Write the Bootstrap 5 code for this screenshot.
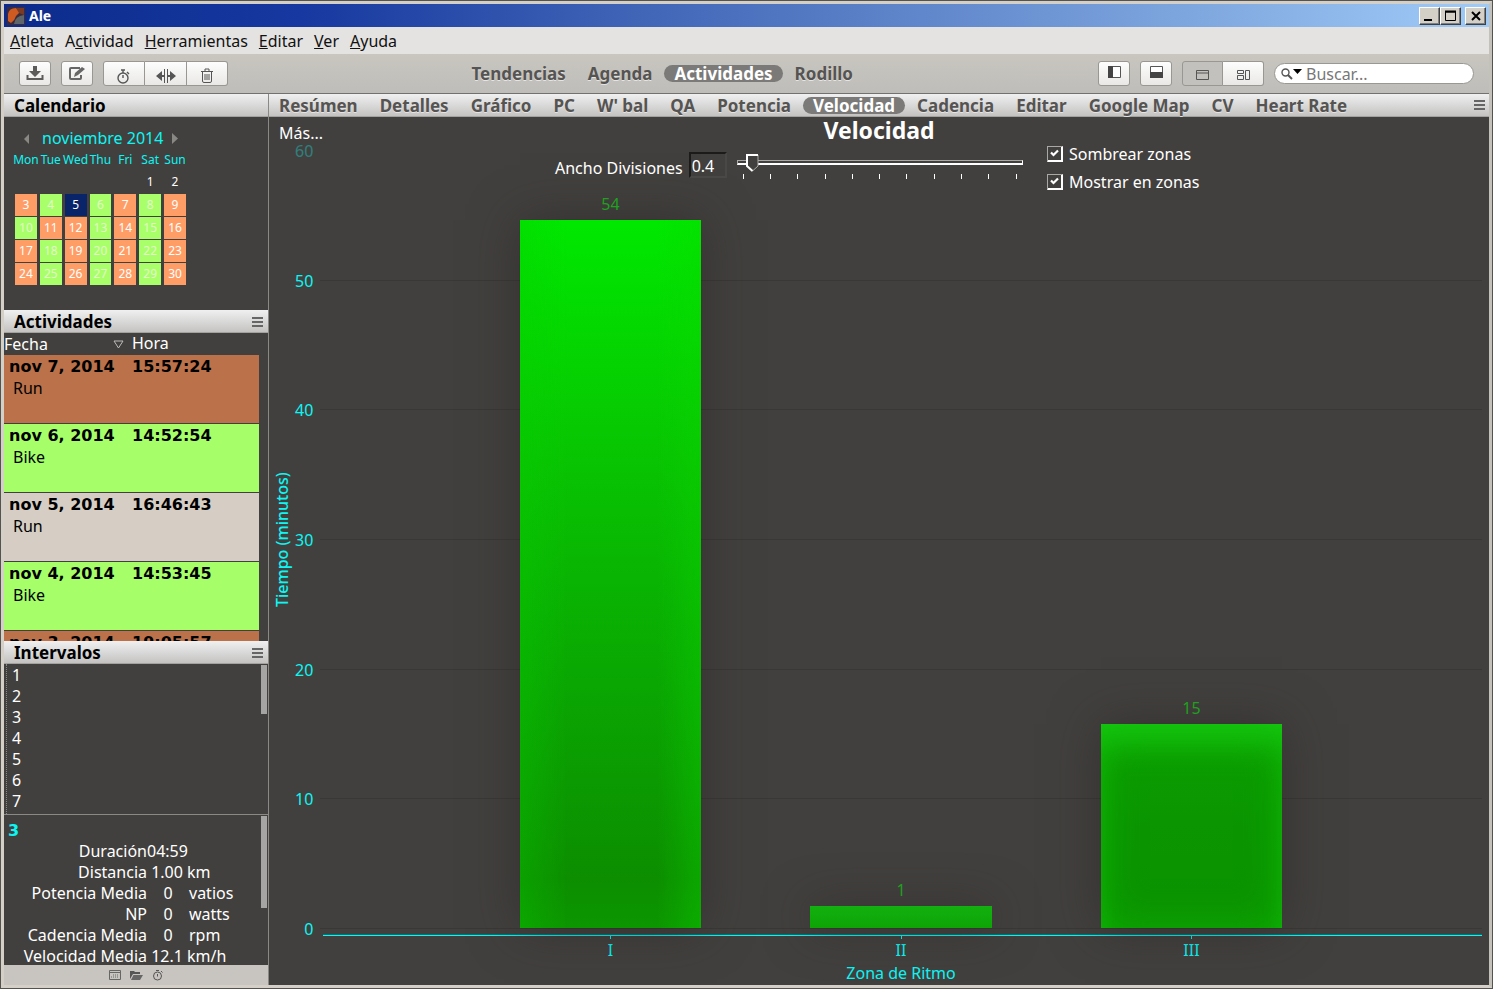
<!DOCTYPE html>
<html lang="es">
<head>
<meta charset="utf-8">
<meta name="viewport" content="width=device-width, initial-scale=1">
<title>Ale</title>
<link href="https://cdn.jsdelivr.net/npm/bootstrap@5.3.0/dist/css/bootstrap.min.css" rel="stylesheet">
<style>
:root{--chrome:#c8c5c0;--dark:#42403e;--cyan:#0cf6f4;--wide:"DejaVu Sans",sans-serif}
body{font-family:"Noto Sans","DejaVu Sans",sans-serif;font-size:16px;line-height:21px;color:#fff;background:#d4d0c8}
button,input{font:inherit}
a{color:inherit;text-decoration:none}
.win{height:100vh;border:4px solid #d4d0c8;border-right-color:#c4c1ba;outline:1px solid #55534f;outline-offset:-1px}
.titlebar{height:23px;background:linear-gradient(90deg,#0c2b8c,#1638a0 20%,#3c60b4 40%,#7ba3dc 78%,#a0cbf8);font-size:14px;font-weight:700;padding:0 3px}
.sysbtn{width:21px;height:18px;padding:0;background:#d4d0c8;border:1px solid;border-color:#fff #404040 #404040 #fff;box-shadow:inset -1px -1px #808080;display:flex}
.menubar{height:27px;background:#e4e3e2;color:#111;padding:1px 6px 0;gap:11px}
.toolbar{height:39px;background:linear-gradient(#c9c6bf,#bebdba);padding:0 15px}
.tools{gap:10px}
.tools-left{flex:42 1 0}
.tools-right{flex:58 1 0}
.tool{height:25px;padding:0;border:1px solid #999792;border-radius:3px;background:linear-gradient(#fdfdfd,#e9e8e6);display:flex;align-items:center;justify-content:center}
.tool-a{width:32px}
.tool-b{width:42px}
.tool-c{width:41px}
.tool.pressed{background:#c3c1be}
.btn-group .tool+.tool{border-left:0}
.btn-group .tool:not(:last-child){border-top-right-radius:0;border-bottom-right-radius:0}
.btn-group .tool:not(:first-child){border-top-left-radius:0;border-bottom-left-radius:0}
.tabs{gap:2px}
.tab{font-size:17px;font-weight:700;color:#555452;padding:0 10px;height:17px;line-height:18px;border-radius:9px;text-shadow:0 1px #e6e5e3;white-space:nowrap}
.tab.on{background:#7b7a78;color:#fff;text-shadow:none}
.search{width:200px;height:21px;background:#fff;border:1px solid #9a9893;border-radius:11px;padding:0 6px}
.search input{border:0;outline:0;background:none;min-width:0;width:150px;height:19px;padding:1px 0 0;margin-left:1px}
.search input::placeholder{color:#777;opacity:1}
.work{border-top:1px solid #73716e;min-height:0}
.side{width:264px;background:var(--dark)}
.bar{height:23px;flex:none;background:linear-gradient(#f0f0f0,#c4c3c2);border-bottom:1px solid #a3a29f}
.bar.tabs{padding-top:1px}
.side-bar{color:#000;font-weight:700;font-size:17px;line-height:20px;padding:2px 5px 0 10px}
.burger{border:0;padding:0 0 1px;background:none;display:flex}
.cal{height:193px;padding:11px}
.cal-head{color:var(--cyan);height:21px}
.cal table{border-collapse:separate;border-spacing:3px 1px;margin:0 0 0 -3px;font-size:12px;line-height:20px;text-align:center;table-layout:fixed;width:177px}
.cal td,.cal th{padding:0;height:22px;font-weight:400;white-space:nowrap}
.cal th{color:var(--cyan);height:20px}
.cal th span{display:flex;justify-content:center;margin:0 -4px}
.cal td.run{background:#ff9d66}
.cal td.bike{background:#a8ff6a;color:#e4fac8}
.cal td.today{background:#0a246a}
.acts{min-height:0;overflow:hidden}
.acts-head{height:22px;line-height:20px}
.col-date{width:128px}
.act{height:69px;margin-right:9px;padding:1px 5px;color:#000;border-bottom:1px solid #42403e}
.act .when{font-family:var(--wide);font-weight:700;height:22px}
.act .col-date{width:123px}
.act.run{background:#bb714a}
.act.bike{background:#a6ff69}
.act.sel{background:#d6cec5}
.scrollbox{height:150px;overflow:hidden;position:relative}
.thumb{position:absolute;top:1px;right:1px;width:6px;background:#a5a5a4}
.laps{border-left:1px dotted #8a8884;margin-left:2px;padding:1px 5px;height:150px}
.info{border-top:1px solid #8b8986;height:151px;padding-top:5px}
.info-id{color:var(--cyan);font-family:var(--wide);font-weight:700;padding-left:4px}
.info td{padding:0}
.info td:first-child{width:143px;text-align:right}
.info td.num{width:42px;text-align:center}
.sidefoot{height:20px;flex:none;background:var(--chrome);gap:9px}
.sidefoot button{border:0;padding:0;background:none;display:flex}
.main{border-left:1px solid #8b8986;background:var(--dark);min-width:0}
.chart{min-height:0}
.chart-title{font-size:23px;font-weight:700;height:34px;line-height:26px}
.more{position:absolute;left:10px;top:6px}
.knobs{position:absolute;top:27px;left:286px;gap:6px}
.knobs label{line-height:16px}
.bin{width:38px;height:26px;color:#fff;background:transparent;border:2px solid;border-color:#1c1b1a #4a4846 #4a4846 #1c1b1a;padding:2px 1px 0}
.slide{width:286px}
.slide input{appearance:none;display:block;width:100%;height:20px;background:none;margin:0}
.slide input::-webkit-slider-runnable-track{height:5px;border:1px solid #aaa8a5;border-bottom:2px solid #fff;border-right-color:#fff}
.slide input::-webkit-slider-thumb{appearance:none;width:13px;height:18px;margin-top:-7px;background:url("data:image/svg+xml,%3Csvg xmlns='http://www.w3.org/2000/svg' viewBox='0 0 13 18'%3E%3Cpath d='M1 1h11v11l-5.500 5L1 12z' fill='%2342403e'/%3E%3Cpath d='M12 1v11l-5.500 5' fill='none' stroke='%23aaa'/%3E%3Cpath d='M12 1H1v11l5.500 5' fill='none' stroke='%23fff' stroke-width='2'/%3E%3C/svg%3E")}
.ticks{padding:2px 6px 0}
.ticks i{width:1px;height:5px;background:#fff}
.checks{position:absolute;top:27px;left:778px;gap:7px}
.checks input{appearance:none;width:16px;height:16px;margin:0 6px 2px 0;border:1px solid;border-color:#aaa8a5 #fff #fff #aaa8a5;box-shadow:inset -1px -1px #fff;background:url("data:image/svg+xml,%3Csvg xmlns='http://www.w3.org/2000/svg' viewBox='0 0 14 14'%3E%3Cpath d='M3 5.500 5.500 8 10 3.500' fill='none' stroke='%23fff' stroke-width='2.200'/%3E%3C/svg%3E")}
.ycol{width:51px;color:var(--cyan)}
.yname{writing-mode:vertical-rl;transform:rotate(180deg);font-weight:500;width:26px;text-align:center;line-height:26px}
.yticks{padding-right:8px}
.yticks span{height:0;line-height:0}
.yticks span:first-child{opacity:.35}
.plot{margin-right:7px;position:relative}
.rules{position:absolute;inset:0}
.rules i{border-bottom:1px solid #3a3836}
.bars{position:absolute;inset:0 0 1px;padding:0 12.5%}
.vbar{width:62.5%;position:relative;box-shadow:0 0 45px rgba(40,36,36,.55)}
.vbar b{position:absolute;top:-26px;width:100%;text-align:center;font-weight:400;color:#1fa01f}
.tall{background:linear-gradient(90deg,rgba(8,205,0,.3),transparent 26%,transparent 76%,rgba(10,215,0,.35)),linear-gradient(#00e800,#08c402 34%,#0aa602 66%,#0c8e00 93%,#0c9600)}
.mid{background:linear-gradient(#0ca002,#0b9500 50%,#0b9200);box-shadow:inset 0 30px 34px -14px #15c80f,inset 0 0 40px #0eac05,0 0 45px rgba(40,36,36,.55)}
.low{background:linear-gradient(#12b010,#0ea406)}
.xaxis{height:56px;margin:0 7px 0 51px;color:var(--cyan);padding-top:5px}
.xline{height:2px;background:linear-gradient(#156c6c 50%,var(--cyan) 50%);margin-left:3px}
.xnames{padding:0 12.5%}
.xnames span{line-height:23px;padding-top:3px;background:linear-gradient(var(--cyan),var(--cyan)) 50% 0/1px 3px no-repeat}
.xname{line-height:22px}
</style>
</head>
<body>
<div class="win d-flex flex-column overflow-hidden">
  <header class="titlebar d-flex align-items-center flex-shrink-0">
    <svg width="18" height="18" viewBox="0 0 18 18"><rect width="18" height="18" fill="#3d2b38"/><path d="M1 14V7Q2 1 9 1l4 4-4 4q-1 4-5 7z" fill="#cf5a22"/><path d="M7 17q1-8 10-9v9z" fill="#5e666c"/><path d="M9 1h8v7l-5-2z" fill="#7a3a24"/></svg>
    <span class="ms-1">Ale</span>
    <div class="d-flex ms-auto">
      <button class="sysbtn" aria-label="Minimizar"><svg width="19" height="16"><path d="M4 12h8" stroke="#000" stroke-width="2"/></svg></button>
      <button class="sysbtn" aria-label="Maximizar"><svg width="19" height="16"><path d="M4.500 3v9.500h10V3M4 4h11" fill="none" stroke="#000"/><path d="M4 3.500h11" stroke="#000" stroke-width="2"/></svg></button>
      <button class="sysbtn ms-1" aria-label="Cerrar"><svg width="19" height="16"><path d="m6 4 8 8m0-8-8 8" stroke="#000" stroke-width="2"/></svg></button>
    </div>
  </header>
  <nav class="menubar d-flex align-items-center flex-shrink-0" aria-label="Menú">
    <a href="#"><u>A</u>tleta</a><a href="#">A<u>c</u>tividad</a><a href="#"><u>H</u>erramientas</a><a href="#"><u>E</u>ditar</a><a href="#"><u>V</u>er</a><a href="#"><u>A</u>yuda</a>
  </nav>
  <div class="toolbar d-flex align-items-center flex-shrink-0">
    <div class="tools tools-left d-flex">
      <button class="tool tool-a" aria-label="Descargar"><svg width="18" height="16" viewBox="0 0 18 16"><path d="M7 0h4v5h4L9 11 3 5h4z" fill="#5c5b5a"/><path d="M1.500 9v4h15V9" fill="none" stroke="#5c5b5a" stroke-width="2"/></svg></button>
      <button class="tool tool-a" aria-label="Anotar"><svg width="18" height="16" viewBox="0 0 18 16"><path d="M12 2H3Q2 2 2 3v9q0 1 1 1h9q1 0 1-1V9" fill="none" stroke="#666" stroke-width="2"/><path d="M6 11l1-4 7-6 3 2-7 6z" fill="#666"/></svg></button>
      <div class="btn-group">
        <button class="tool tool-b pt-1" aria-label="Cronómetro"><svg width="16" height="16" viewBox="0 0 16 16" fill="none" stroke="#555" stroke-width="1.400"><circle cx="7" cy="10" r="5"/><path d="M7 7v3M5 2h4M7 2v3M11 4l2 2"/></svg></button>
        <button class="tool tool-b pt-1" aria-label="Dividir"><svg width="20" height="14" viewBox="0 0 20 14"><path d="M0 7l6-5v10zM20 7l-6-5v10z" fill="#555"/><path d="M5 7h3M12 7h3" stroke="#555" stroke-width="2"/><path d="M8.500 0v14M11.500 0v14" stroke="#555"/></svg></button>
        <button class="tool tool-c pt-1" aria-label="Eliminar"><svg width="14" height="15" viewBox="0 0 14 15" fill="none" stroke="#555"><path d="M1 3.500h12M5 3V1h4v2M2.500 4v9q0 1.500 1.500 1.500h6q1.500 0 1.500-1.500V4M5 6v6M7 6v6M9 6v6"/></svg></button>
      </div>
    </div>
    <nav class="tabs d-flex" aria-label="Vistas">
      <a class="tab" href="#">Tendencias</a><a class="tab" href="#">Agenda</a><a class="tab on" href="#">Actividades</a><a class="tab" href="#">Rodillo</a>
    </nav>
    <div class="tools tools-right d-flex align-items-center justify-content-end">
      <button class="tool tool-a pb-1" aria-label="Barra lateral"><svg width="13" height="12"><path d="M.5.500h12v11H.5z" fill="#fff" stroke="#555"/><path d="M0 0h5v12H0z" fill="#444"/></svg></button>
      <button class="tool tool-a pb-1" aria-label="Panel inferior"><svg width="13" height="12"><path d="M.5.500h12v11H.5z" fill="#fff" stroke="#555"/><path d="M0 6h13v6H0z" fill="#444"/></svg></button>
      <div class="btn-group">
        <button class="tool tool-c pressed pt-1" aria-label="Pestañas"><svg width="13" height="11"><path d="M.5.500h12v9H.5zM.5 3h12" fill="none" stroke="#555"/></svg></button>
        <button class="tool tool-c pt-1" aria-label="Mosaico"><svg width="13" height="11"><path d="M.5.500h6v3h-6zM.5 5.500h6v4h-6zM8.500.500h4v9h-4z" fill="none" stroke="#555"/></svg></button>
      </div>
      <label class="search d-flex align-items-center"><svg width="24" height="12" viewBox="0 0 24 12"><circle cx="4.500" cy="4.500" r="3.500" fill="none" stroke="#555" stroke-width="1.400"/><path d="M7 7l4 4" stroke="#555" stroke-width="2"/><path d="M12 1h9l-4.500 5z" fill="#000"/></svg><input type="text" placeholder="Buscar..." aria-label="Buscar"></label>
    </div>
  </div>
  <div class="work d-flex flex-grow-1">
    <aside class="side d-flex flex-column flex-shrink-0">
      <h2 class="bar side-bar d-flex align-items-center m-0">Calendario</h2>
      <div class="cal flex-shrink-0">
        <div class="cal-head d-flex align-items-center">
          <svg width="27" height="10"><path d="M14 0v10L9 5z" fill="#8a8884"/></svg><span>noviembre 2014</span><svg class="ms-1" width="16" height="11"><path d="M5 0v11l6-5.500z" fill="#8a8884"/></svg>
        </div>
        <table><thead><tr><th><span>Mon</span></th><th><span>Tue</span></th><th><span>Wed</span></th><th><span>Thu</span></th><th><span>Fri</span></th><th><span>Sat</span></th><th><span>Sun</span></th></tr></thead>
        <tbody>
        <tr><td></td><td></td><td></td><td></td><td></td><td>1</td><td>2</td></tr>
        <tr><td class="run">3</td><td class="bike">4</td><td class="today">5</td><td class="bike">6</td><td class="run">7</td><td class="bike">8</td><td class="run">9</td></tr>
        <tr><td class="bike">10</td><td class="run">11</td><td class="run">12</td><td class="bike">13</td><td class="run">14</td><td class="bike">15</td><td class="run">16</td></tr>
        <tr><td class="run">17</td><td class="bike">18</td><td class="run">19</td><td class="bike">20</td><td class="run">21</td><td class="bike">22</td><td class="run">23</td></tr>
        <tr><td class="run">24</td><td class="bike">25</td><td class="run">26</td><td class="bike">27</td><td class="run">28</td><td class="bike">29</td><td class="run">30</td></tr>
        </tbody></table>
      </div>
      <h2 class="bar side-bar d-flex align-items-center m-0">Actividades<button class="burger ms-auto" aria-label="Opciones"><svg width="11" height="10"><path d="M0 1h11M0 5h11M0 9h11" stroke="#666" stroke-width="2"/></svg></button></h2>
      <div class="acts flex-grow-1">
        <div class="acts-head d-flex"><span class="col-date d-flex align-items-center">Fecha<svg class="ms-auto me-2" width="11" height="9"><path d="M1 1h9L5.500 8z" fill="none" stroke="#bbb"/></svg></span><span>Hora</span></div>
        <div class="act run"><div class="when d-flex"><span class="col-date">nov 7, 2014</span>15:57:24</div><div class="ps-1">Run</div></div>
        <div class="act bike"><div class="when d-flex"><span class="col-date">nov 6, 2014</span>14:52:54</div><div class="ps-1">Bike</div></div>
        <div class="act sel"><div class="when d-flex"><span class="col-date">nov 5, 2014</span>16:46:43</div><div class="ps-1">Run</div></div>
        <div class="act bike"><div class="when d-flex"><span class="col-date">nov 4, 2014</span>14:53:45</div><div class="ps-1">Bike</div></div>
        <div class="act run"><div class="when d-flex"><span class="col-date">nov 3, 2014</span>19:05:57</div></div>
      </div>
      <h2 class="bar side-bar d-flex align-items-center m-0">Intervalos<button class="burger ms-auto" aria-label="Opciones"><svg width="11" height="10"><path d="M0 1h11M0 5h11M0 9h11" stroke="#666" stroke-width="2"/></svg></button></h2>
      <div class="scrollbox flex-shrink-0">
        <div class="laps"><div>1</div><div>2</div><div>3</div><div>4</div><div>5</div><div>6</div><div>7</div></div>
        <div class="thumb" style="height:49px"></div>
      </div>
      <div class="scrollbox info flex-shrink-0">
        <div class="info-id">3</div>
        <table><tbody>
          <tr><td>Duración</td><td colspan="2">04:59</td></tr>
          <tr><td>Distancia</td><td colspan="2">&nbsp;1.00 km</td></tr>
          <tr><td>Potencia Media</td><td class="num">0</td><td>vatios</td></tr>
          <tr><td>NP</td><td class="num">0</td><td>watts</td></tr>
          <tr><td>Cadencia Media</td><td class="num">0</td><td>rpm</td></tr>
          <tr><td>Velocidad Media</td><td colspan="2">&nbsp;12.1 km/h</td></tr>
        </tbody></table>
        <div class="thumb" style="height:92px"></div>
      </div>
      <div class="sidefoot d-flex align-items-center justify-content-center">
        <button aria-label="Calendario"><svg width="12" height="12"><path d="M.5 1.500h11v9H.5zM.5 3.500h11" fill="none" stroke="#666"/><path d="M4 6h6M2 8h7" stroke="#666" stroke-dasharray="1 1"/></svg></button>
        <button aria-label="Carpeta"><svg width="13" height="12"><path d="M0 10V2h4l1 1h5v2H3z" fill="#555"/><path d="M3.500 6H13l-3 5H1z" fill="#666"/></svg></button>
        <button aria-label="Intervalos"><svg width="12" height="12" fill="none" stroke="#555"><circle cx="5.500" cy="7" r="4"/><path d="M5.500 5v2.500M4 1.500h3M9 2l1.500 1.500"/></svg></button>
      </div>
    </aside>
    <main class="main d-flex flex-column flex-grow-1">
      <nav class="bar tabs d-flex align-items-center" aria-label="Gráficos">
        <a class="tab" href="#">Resúmen</a><a class="tab" href="#">Detalles</a><a class="tab" href="#">Gráfico</a><a class="tab" href="#">PC</a><a class="tab" href="#">W' bal</a><a class="tab" href="#">QA</a><a class="tab" href="#">Potencia</a><a class="tab on" href="#">Velocidad</a><a class="tab" href="#">Cadencia</a><a class="tab" href="#">Editar</a><a class="tab" href="#">Google Map</a><a class="tab" href="#">CV</a><a class="tab" href="#">Heart Rate</a>
        <button class="burger ms-auto me-1" aria-label="Opciones"><svg width="11" height="10"><path d="M0 1h11M0 5h11M0 9h11" stroke="#666" stroke-width="2"/></svg></button>
      </nav>
      <section class="chart position-relative d-flex flex-column flex-grow-1">
        <h1 class="chart-title text-center m-0">Velocidad</h1>
        <div class="d-flex flex-grow-1">
          <div class="ycol d-flex">
            <div class="yname">Tiempo (minutos)</div>
            <div class="yticks d-flex flex-column justify-content-between text-end flex-grow-1"><span>60</span><span>50</span><span>40</span><span>30</span><span>20</span><span>10</span><span>0</span></div>
          </div>
          <div class="plot flex-grow-1">
            <div class="rules d-flex flex-column"><i class="flex-fill"></i><i class="flex-fill"></i><i class="flex-fill"></i><i class="flex-fill"></i><i class="flex-fill"></i><i class="flex-fill"></i></div>
            <div class="bars d-flex align-items-end">
              <div class="h-100 flex-fill d-flex align-items-end justify-content-center"><div class="vbar tall" style="height:91.1%"><b>54</b></div></div>
              <div class="h-100 flex-fill d-flex align-items-end justify-content-center"><div class="vbar low" style="height:2.8%"><b>1</b></div></div>
              <div class="h-100 flex-fill d-flex align-items-end justify-content-center"><div class="vbar mid" style="height:26.2%"><b>15</b></div></div>
            </div>
          </div>
        </div>
        <div class="xaxis">
          <div class="xline"></div>
          <div class="xnames d-flex text-center"><span class="flex-fill w-100">I</span><span class="flex-fill w-100">II</span><span class="flex-fill w-100">III</span></div>
          <div class="xname text-center">Zona de Ritmo</div>
        </div>
        <button class="burger more text-white">Más...</button>
        <div class="knobs d-flex">
          <label for="bin" class="pt-3">Ancho Divisiones</label>
          <input id="bin" class="bin mt-2" type="text" value="0.4">
          <div class="slide mt-2 ms-1">
            <input type="range" min="0" max="100" value="3" aria-label="Ancho Divisiones">
            <div class="ticks d-flex justify-content-between"><i></i><i></i><i></i><i></i><i></i><i></i><i></i><i></i><i></i><i></i><i></i></div>
          </div>
        </div>
        <div class="checks d-flex flex-column">
          <label class="d-flex align-items-center"><input type="checkbox" checked>Sombrear zonas</label>
          <label class="d-flex align-items-center"><input type="checkbox" checked>Mostrar en zonas</label>
        </div>
      </section>
    </main>
  </div>
</div>
<script src="https://cdn.jsdelivr.net/npm/bootstrap@5.3.0/dist/js/bootstrap.bundle.min.js"></script>
</body>
</html>
